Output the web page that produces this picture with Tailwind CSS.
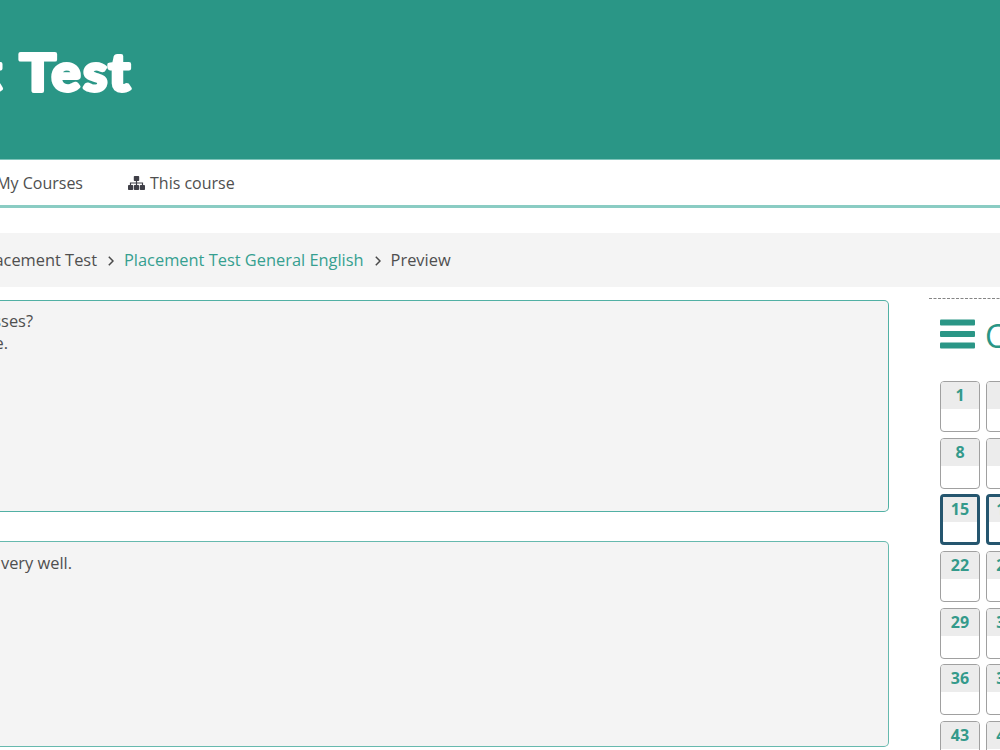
<!DOCTYPE html>
<html lang="en">
<head>
  <meta charset="UTF-8" />
  <meta name="viewport" content="width=device-width, initial-scale=1.0"/>
  <title>Placement Test General English</title>
  <script src="https://cdn.jsdelivr.net/npm/@tailwindcss/browser@4"></script>
</head>
<body class="w-[1000px] h-[750px] overflow-hidden bg-white font-['Open_Sans',sans-serif] text-[16.4px] leading-[22px] text-[#4f4f4f]">

  <!-- Header -->
  <header class="h-[160px] bg-[#2a9686] border-b border-[#7fc4ba]">
    <svg class="block" width="1000" height="159" viewBox="0 0 1000 159" font-family="Lato, sans-serif" font-weight="700" font-size="51" fill="#fff" stroke="#fff" stroke-width="3.8" stroke-linejoin="round">
      <text x="1.5" y="91.3" text-anchor="end">t</text>
      <text y="91.3"><tspan x="19.7" textLength="36" lengthAdjust="spacingAndGlyphs">T</tspan><tspan x="51.5" textLength="29" lengthAdjust="spacingAndGlyphs">e</tspan><tspan x="83.2" textLength="24" lengthAdjust="spacingAndGlyphs">s</tspan><tspan x="108.5" textLength="21.5" lengthAdjust="spacingAndGlyphs">t</tspan></text>
    </svg>
  </header>

  <!-- Navigation -->
  <nav class="h-[48px] flex items-center border-b-[3px] border-[#8accc3] text-[16px]">
    <div class="w-[83px] flex justify-end whitespace-nowrap"><a>My Courses</a></div>
    <a class="ml-[45px] flex items-center whitespace-nowrap">
      <svg class="w-[17px] h-[14px] mr-[5px]" viewBox="0 0 17 14" fill="#3f3f47">
        <rect x="5.8" y="0" width="5.4" height="5" rx=".8"/>
        <rect x="0" y="9" width="5.2" height="5" rx=".8"/>
        <rect x="5.9" y="9" width="5.2" height="5" rx=".8"/>
        <rect x="11.8" y="9" width="5.2" height="5" rx=".8"/>
        <path d="M8.5 4v6M2.5 10V7h12v3" fill="none" stroke="#3f3f47" stroke-width="1.2"/>
      </svg>
      This course
    </a>
  </nav>

  <!-- Breadcrumb -->
  <div class="mt-[25px] h-[54px] pb-px bg-[#f4f4f4] flex items-center whitespace-nowrap">
    <div class="w-[97px] flex justify-end"><span>Placement Test</span></div>
    <svg class="ml-[11px] mr-[10px] mt-[2px] w-[6px] h-[10px]" viewBox="0 0 6 10" fill="none" stroke="#4a4a4a" stroke-width="1.5"><path d="M.8 .8L5 5L.8 9.2"/></svg>
    <a class="text-[#369f90]">Placement Test General English</a>
    <svg class="ml-[11px] mr-[10px] mt-[2px] w-[6px] h-[10px]" viewBox="0 0 6 10" fill="none" stroke="#4a4a4a" stroke-width="1.5"><path d="M.8 .8L5 5L.8 9.2"/></svg>
    <span>Preview</span>
  </div>

  <div class="flex">
    <!-- Questions -->
    <main class="w-[889px] shrink-0 pt-[13px]">
      <section class="h-[212px] mb-[29px] pt-[9px] bg-[#f4f4f4] border border-l-0 border-[#51b0a4] rounded-r-[5px]">
        <div class="w-[33px] flex justify-end"><span>classes?</span></div>
        <div class="w-[8px] flex justify-end"><span>me.</span></div>
      </section>
      <section class="h-[206px] pt-[10px] bg-[#f4f4f4] border border-l-0 border-[#66b9ae] rounded-r-[5px]">
        <div class="w-[72px] flex justify-end whitespace-nowrap"><span>very well.</span></div>
      </section>
    </main>

    <!-- Quiz navigation -->
    <aside class="ml-[40px] mt-[11px] w-[71px] shrink-0 overflow-hidden">
      <svg class="block w-[71px] h-[1px]"><path d="M0 .5H71" stroke="#858585" stroke-dasharray="3 1.5"/></svg>
      <div class="pl-[11px] pt-[20px]">
        <h2 class="flex h-[38px] text-[32px] leading-[33px] text-[#2a9686]">
          <svg class="w-[35px] h-[30px] mr-[10px] shrink-0" viewBox="0 0 35 30" fill="#2a9686">
            <rect y=".5" width="35" height="6" rx="1"/>
            <rect y="12" width="35" height="6" rx="1"/>
            <rect y="23.5" width="35" height="6" rx="1"/>
          </svg>
          <span>C</span>
        </h2>
        <div id="grid" class="mt-[24px] grid grid-cols-[40px_40px] gap-x-[5.5px] gap-y-[5.7px]"></div>
      </div>
    </aside>
  </div>

  <script>
    const grid = document.getElementById('grid');
    for (let n = 1; n <= 43; n += 7) {
      for (let i = 0; i < 2; i++) {
        const border = n === 15 ? 'border-[3px] border-[#25566f]' : 'border border-[#a0a0a0]';
        const top = n === 15 ? 'h-[25px] leading-[24px]' : 'h-[27px] leading-[27px]';
        grid.innerHTML += `<a class="h-[51px] rounded-[4px] overflow-hidden text-center font-bold text-[16px] text-[#349a8b] bg-white ${border}"><span class="block bg-[#ececec] ${top}">${n + i}</span></a>`;
      }
    }
  </script>
</body>
</html>
